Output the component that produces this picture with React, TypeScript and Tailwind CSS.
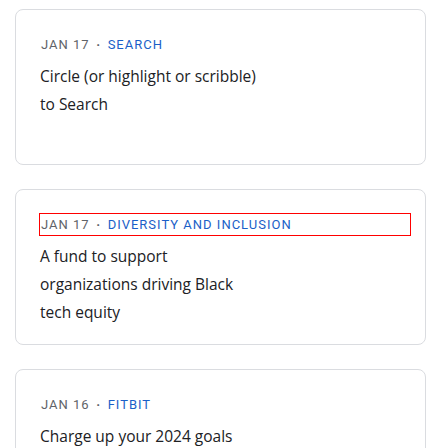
const posts = [
  { date: 'JAN 17', tag: 'SEARCH', title: ['Circle (or highlight or scribble)', 'to Search'] },
  {
    date: 'JAN 17',
    tag: 'DIVERSITY AND INCLUSION',
    title: ['A fund to support', 'organizations driving Black', 'tech equity'],
    focused: true,
  },
  { date: 'JAN 16', tag: 'FITBIT', title: ['Charge up your 2024 goals'] },
];

export default function App() {
  return (
    <div className="flex h-[448px] flex-col gap-[24px] overflow-hidden bg-white pl-[15px] pr-[22px] pt-[9px]">
      {posts.map((post) => (
        <article
          key={post.tag}
          className="flex h-[156px] shrink-0 flex-col rounded-[8px] border border-[#dadce0] pt-[24px] pl-[24px] pr-[15px]"
        >
          <div
            className={
              "flex h-[21px] items-center font-['Roboto',sans-serif] text-[13px] tracking-[1px] text-[#5f6368] " +
              (post.focused ? 'outline outline-1 outline-[#ff0000]' : '')
            }
          >
            <span className="pl-px">{post.date}</span>
            <span className="w-[18px] text-center font-bold">·</span>
            <span className="text-[#1a5fc8]">{post.tag}</span>
          </div>
          <h3 className="mt-[7px] font-['Open_Sans',sans-serif] text-[15.5px] leading-[28px] text-[#202124]">
            {post.title.map((line) => (
              <div key={line}>{line}</div>
            ))}
          </h3>
        </article>
      ))}
    </div>
  );
}
